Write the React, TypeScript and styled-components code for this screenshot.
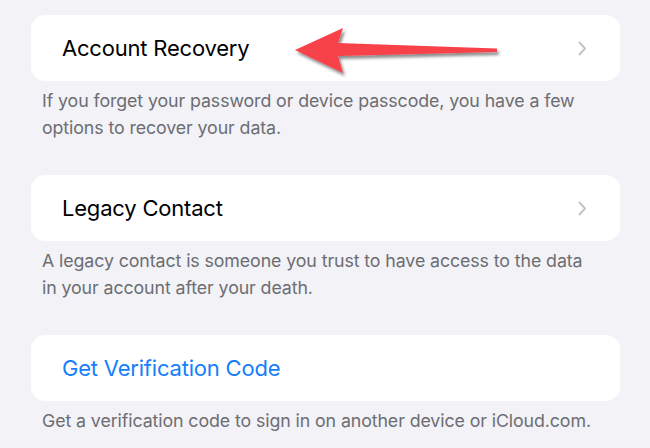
import React from "react";
import styled, { createGlobalStyle } from "styled-components";

const GlobalStyle = createGlobalStyle`
  html, body {
    margin: 0;
    padding: 0;
    background: #f2f2f7;
  }
  body {
    font-family: Inter, "Noto Sans", "Liberation Sans", sans-serif;
    -webkit-font-smoothing: antialiased;
  }
`;

const Page = styled.div`
  position: relative;
  width: 650px;
  height: 448px;
  overflow: hidden;
  box-sizing: border-box;
  padding: 15px 30px 0 31px;
  display: flex;
  flex-direction: column;
  gap: 34px;
`;

const Group = styled.section`
  display: flex;
  flex-direction: column;
`;

const Card = styled.div`
  height: 66px;
  background: #ffffff;
  border-radius: 14px;
  display: flex;
  align-items: center;
  justify-content: space-between;
  padding: 0 33px 0 31px;
`;

const Label = styled.span<{ $link?: boolean }>`
  font-size: 22px;
  letter-spacing: -0.2px;
  color: ${(p) => (p.$link ? "#157efb" : "#000000")};
`;

const Footer = styled.p`
  margin: 7px 0 0;
  padding-left: 11px;
  font-size: 17.8px;
  line-height: 26.5px;
  letter-spacing: -0.1px;
  color: #6d6d72;
  white-space: nowrap;
`;

const Arrow = styled.svg`
  position: absolute;
  left: 290px;
  top: 24px;
  overflow: visible;
`;

function Chevron() {
  return (
    <svg width="9" height="15" viewBox="0 0 9 15">
      <path d="M1.5 1.5 L7 7.5 L1.5 13.5" fill="none" stroke="#c4c4c7" strokeWidth="2" strokeLinecap="round" strokeLinejoin="round" />
    </svg>
  );
}

interface RowProps {
  label: string;
  footer: string[];
  link?: boolean;
  chevron?: boolean;
}

function Row({ label, footer, link, chevron }: RowProps) {
  return (
    <Group>
      <Card>
        <Label $link={link}>{label}</Label>
        {chevron && <Chevron />}
      </Card>
      <Footer>
        {footer.map((line, i) => (
          <React.Fragment key={i}>
            {line}
            {i < footer.length - 1 && <br />}
          </React.Fragment>
        ))}
      </Footer>
    </Group>
  );
}

export default function App() {
  return (
    <>
      <GlobalStyle />
      <Page>
        <Row
          label="Account Recovery"
          chevron
          footer={["If you forget your password or device passcode, you have a few", "options to recover your data."]}
        />
        <Row
          label="Legacy Contact"
          chevron
          footer={["A legacy contact is someone you trust to have access to the data", "in your account after your death."]}
        />
        <Row
          label="Get Verification Code"
          link
          footer={["Get a verification code to sign in on another device or iCloud.com."]}
        />
        <Arrow width="220" height="60" viewBox="0 0 220 60">
          <defs>
            <filter id="shadow" x="-10%" y="-30%" width="130%" height="170%">
              <feDropShadow dx="2" dy="3" stdDeviation="1.6" floodColor="#000" floodOpacity="0.45" />
            </filter>
          </defs>
          <polygon
            points="5,26 53,4 48,19 207,24.5 207,28 48,32 53,49"
            fill="#f8424a"
            filter="url(#shadow)"
          />
        </Arrow>
      </Page>
    </>
  );
}
